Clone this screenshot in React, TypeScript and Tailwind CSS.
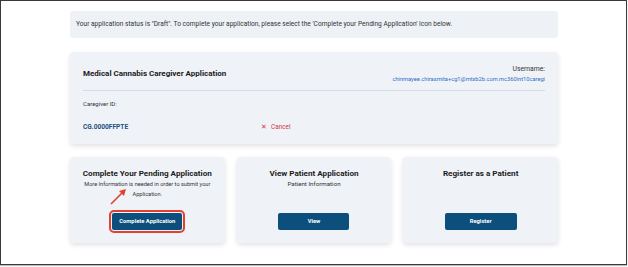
export default function App() {
  return (
    <div className="w-[628px] h-[267px] bg-white" style={{ fontFamily: 'Roboto, "Liberation Sans", sans-serif' }}>
      <div className="w-[627px] h-[265px] border border-[#3a3a3a] bg-white shadow-[0_1px_1px_rgba(0,0,0,0.25)] pl-[69px] pt-[10px]">
        <div className="w-[488px]">
          {/* status banner */}
          <div className="h-[27px] rounded-[3px] bg-[#eef2f7] px-[6px] flex items-center text-[6.6px] text-[#333]">
            Your application status is "Draft". To complete your application, please select the 'Complete your Pending Application' Icon below.
          </div>

          {/* application card */}
          <div className="mt-[14px] rounded-[4px] bg-[#eff3f8] shadow-[0_2px_5px_rgba(0,0,0,0.12)] px-[13px] pt-[12px] pb-[12px]">
            <div className="flex items-center justify-between">
              <h2 className="text-[8px] font-bold text-[#1b1b1b] leading-[20px]">Medical Cannabis Caregiver Application</h2>
              <div className="text-right">
                <p className="text-[6.8px] leading-[10px] text-[#333]">Username:</p>
                <p className="text-[5.7px] leading-[10px] text-[#2f6cc4]">chinmayee.chirasmita+cg1@mtxb2b.com.mc360int10caregi</p>
              </div>
            </div>
            <div className="mt-[6px] h-px bg-[#d6dce4]" />
            <p className="mt-[8px] text-[6px] leading-[10px] text-[#333]">Caregiver ID:</p>
            <div className="mt-[13px] grid grid-cols-[178px_1fr] items-center leading-[10px]">
              <span className="text-[6.6px] font-bold text-[#1f4f7e]">CG.0000FFPTE</span>
              <span className="flex items-center gap-[4px] text-[6.4px] text-[#d9343a]">
                <span className="text-[7px]">✕</span>Cancel
              </span>
            </div>
          </div>

          {/* action cards */}
          <div className="mt-[13px] grid grid-cols-3 gap-[12px]">
            <div className="relative h-[86px] rounded-[4px] bg-[#eff3f8] shadow-[0_2px_5px_rgba(0,0,0,0.12)] pt-[11px] pb-[13px] flex flex-col items-center text-center">
              <h3 className="text-[8.1px] font-bold leading-[11px] text-[#1b1b1b]">Complete Your Pending Application</h3>
              <p className="text-[5.6px] leading-[10px] text-[#333] px-[12px]">More Information is needed in order to submit your Application.</p>
              <button className="mt-auto w-[70px] h-[17px] rounded-[2px] bg-[#0c4f7d] text-white text-[5.8px] font-bold outline-2 outline-[#e2412d] outline-offset-1">
                Complete Application
              </button>
              <svg className="absolute left-[40px] top-[31px]" width="18" height="18" viewBox="0 0 18 18">
                <line x1="1" y1="16" x2="13" y2="4" stroke="#e2412d" strokeWidth="1.6" />
                <polygon points="16,1 9,3 14,8" fill="#e2412d" />
              </svg>
            </div>

            <div className="h-[86px] rounded-[4px] bg-[#eff3f8] shadow-[0_2px_5px_rgba(0,0,0,0.12)] pt-[11px] pb-[13px] flex flex-col items-center text-center">
              <h3 className="text-[8.1px] font-bold leading-[11px] text-[#1b1b1b]">View Patient Application</h3>
              <p className="text-[6.2px] leading-[10px] text-[#333]">Patient Information</p>
              <button className="mt-auto w-[71px] h-[17px] rounded-[2px] bg-[#0c4f7d] text-white text-[5.8px] font-bold">
                View
              </button>
            </div>

            <div className="h-[86px] rounded-[4px] bg-[#eff3f8] shadow-[0_2px_5px_rgba(0,0,0,0.12)] pt-[11px] pb-[13px] flex flex-col items-center text-center">
              <h3 className="text-[8.1px] font-bold leading-[11px] text-[#1b1b1b]">Register as a Patient</h3>
              <button className="mt-auto w-[72px] h-[17px] rounded-[2px] bg-[#0c4f7d] text-white text-[5.8px] font-bold">
                Register
              </button>
            </div>
          </div>
        </div>
      </div>
    </div>
  );
}
